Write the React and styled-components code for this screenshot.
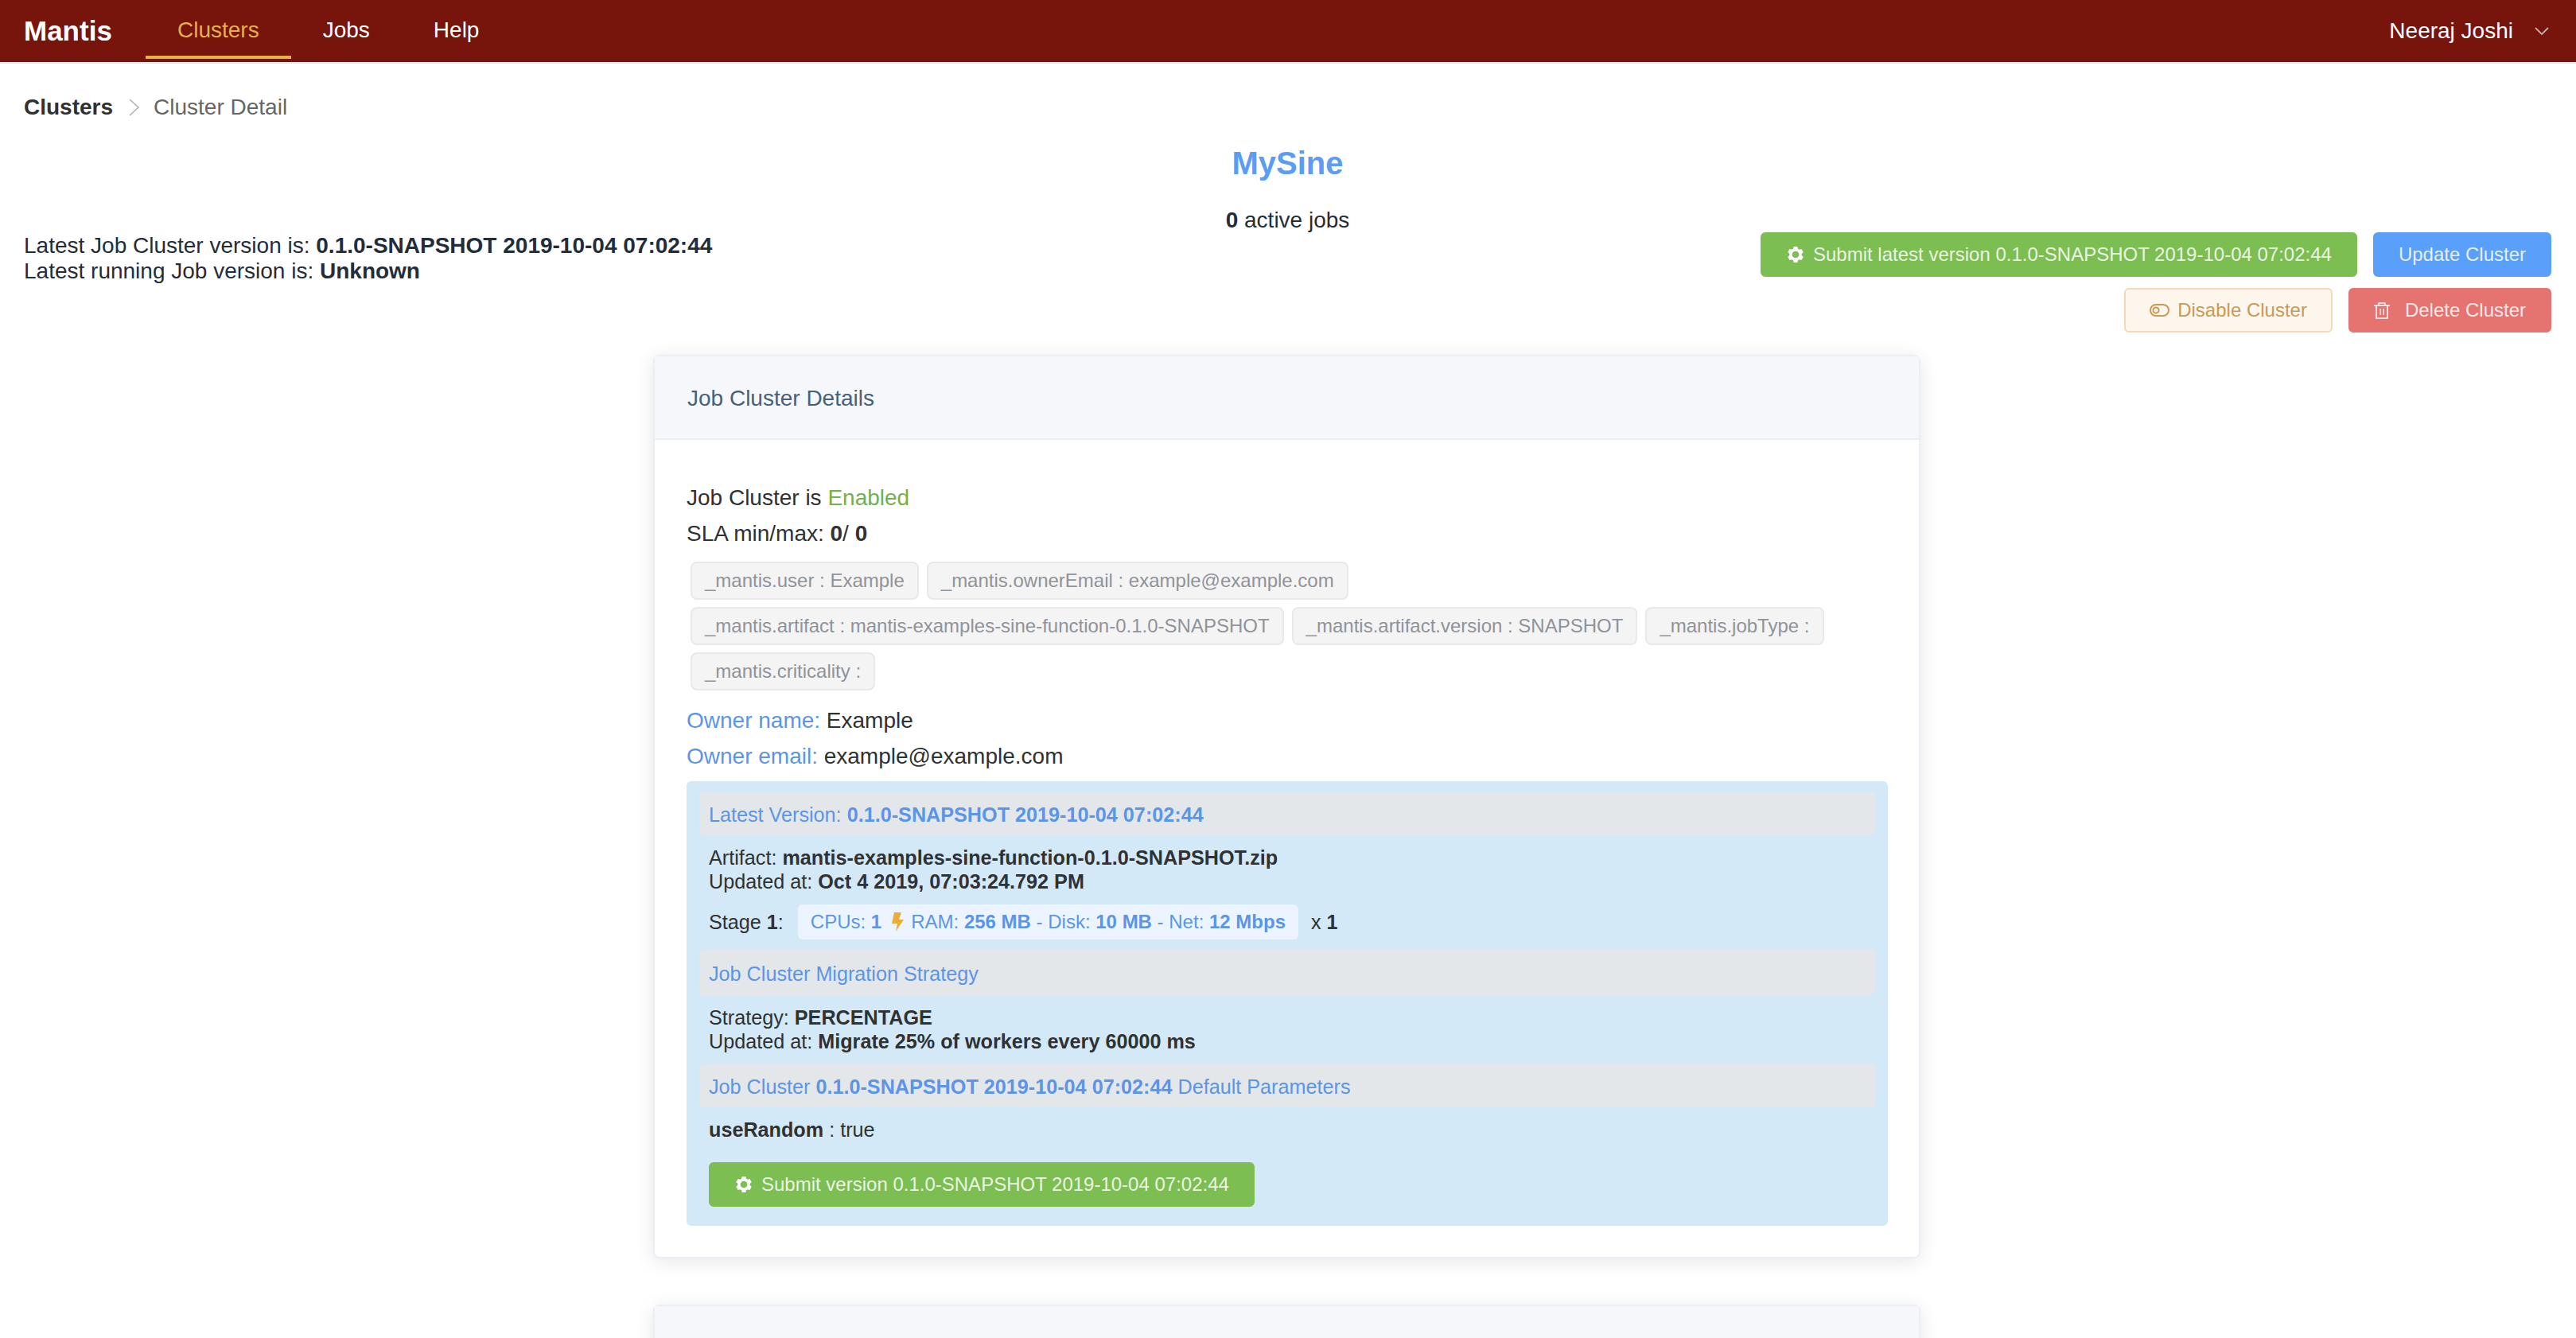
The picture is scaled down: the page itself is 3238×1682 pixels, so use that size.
import React from 'react';
import styled, { createGlobalStyle } from 'styled-components';

const GlobalStyle = createGlobalStyle`
  html, body {
    margin: 0;
    padding: 0;
    background: #fff;
    font-family: 'Liberation Sans', Arial, sans-serif;
    font-size: 28px;
    color: #303133;
  }
`;

const NavBar = styled.header`
  display: flex;
  align-items: center;
  height: 78px;
  background: #77140b;
  border-bottom: 2px solid #e6e6e6;
  padding: 0 34px 0 30px;
  color: #fff;
`;

const Brand = styled.div`
  font-size: 35px;
  font-weight: 700;
  width: 153px;
`;

const NavItem = styled.a`
  display: flex;
  align-items: center;
  height: 72px;
  margin-bottom: 2px;
  padding: 4px 40px 0;
  box-sizing: border-box;
  color: ${p => (p.$active ? '#e4b04a' : '#fff')};
  border-bottom: 4px solid ${p => (p.$active ? '#e4b04a' : 'transparent')};
`;

const UserMenu = styled.div`
  display: flex;
  align-items: center;
  gap: 27px;
  margin-left: auto;
`;

const Page = styled.main`
  padding: 0 31px 0 30px;
`;

const Breadcrumb = styled.nav`
  display: flex;
  align-items: center;
  height: 110px;
  color: #666;
`;

const Crumb = styled.b`
  color: #303133;
`;

const Separator = styled.span`
  display: flex;
  margin: 0 17px 0 20px;
`;

const Summary = styled.section`
  display: grid;
  grid-template-columns: 1fr auto 1fr;
  height: 256px;
`;

const VersionInfo = styled.div`
  padding-top: 103px;
  line-height: 32px;
  color: #1f2d3d;
`;

const TitleBlock = styled.div`
  text-align: center;
`;

const Title = styled.h1`
  margin: 0;
  font-size: 40px;
  line-height: 30px;
  color: #5b9df5;
`;

const ActiveJobs = styled.div`
  margin-top: 37px;
  line-height: 40px;
  color: #1f2d3d;
`;

const Actions = styled.div`
  display: flex;
  flex-direction: column;
  align-items: flex-end;
  gap: 14px;
  padding-top: 102px;
`;

const ActionRow = styled.div`
  display: flex;
  gap: 20px;
`;

const palette = {
  success: { bg: '#7dbe53', fg: 'rgba(255, 255, 255, 0.86)', line: '#7dbe53' },
  primary: { bg: '#5a9ff9', fg: 'rgba(255, 255, 255, 0.86)', line: '#5a9ff9' },
  warning: { bg: '#fdf6ec', fg: '#c99a55', line: '#f5dab1' },
  danger: { bg: '#e5736f', fg: 'rgba(255, 255, 255, 0.86)', line: '#e5736f' },
};

const Button = styled.button`
  display: inline-flex;
  align-items: center;
  gap: ${p => p.$gap || 10}px;
  height: 56px;
  padding: 0 30px;
  box-sizing: border-box;
  font-family: inherit;
  font-size: 24px;
  border-radius: 6px;
  background: ${p => palette[p.$kind].bg};
  color: ${p => palette[p.$kind].fg};
  border: 2px solid ${p => palette[p.$kind].line};
`;

const Card = styled.section`
  width: 1593px;
  margin: ${p => p.$top || 0}px 0 0 791px;
  box-sizing: border-box;
  background: #fff;
  border: 2px solid #ebeef5;
  border-radius: 8px;
  box-shadow: 0 4px 24px rgba(0, 0, 0, 0.1);
`;

const CardHeader = styled.div`
  display: flex;
  align-items: center;
  height: 105px;
  box-sizing: border-box;
  padding: 2px 41px 0;
  background: #f5f7fa;
  border-bottom: 2px solid #ebeef5;
  color: #48617a;
`;

const CardBody = styled.div`
  padding: 50px 39px 39px 40px;
`;

const InfoLine = styled.div`
  height: 45px;
  line-height: 45px;
  color: #303133;
`;

const Enabled = styled.span`
  color: #72b14b;
`;

const TagList = styled.div`
  display: flex;
  flex-wrap: wrap;
  gap: 9px 10px;
  padding: 13px 5px 15px;
`;

const Tag = styled.span`
  display: inline-flex;
  align-items: center;
  height: 48px;
  padding: 0 16px;
  box-sizing: border-box;
  font-size: 24px;
  color: #909399;
  background: #f4f4f5;
  border: 2px solid #e9e9eb;
  border-radius: 8px;
`;

const Label = styled.span`
  color: #5b95e8;
`;

const VersionPanel = styled.div`
  margin-top: 9px;
  padding: 13px 16px 24px;
  background: #d3e9f8;
  border-radius: 6px;
  font-size: 25.2px;
`;

const SectionBar = styled.div`
  display: flex;
  align-items: center;
  gap: 0.28em;
  height: ${p => p.$h || 55}px;
  box-sizing: border-box;
  padding: 3px 12px 0;
  background: #e3e7ea;
  border-radius: 6px;
  color: #5b95e8;
`;

const Facts = styled.div`
  padding: 13px 12px 14px;
  line-height: 30px;
  color: #303133;
`;

const StageRow = styled.div`
  display: flex;
  align-items: center;
  height: 44px;
  padding: 0 12px;
  margin-bottom: 13px;
  color: #303133;
`;

const StagePill = styled.span`
  display: inline-flex;
  align-items: center;
  height: 44px;
  margin: 0 16px 0 18px;
  padding: 0 16px;
  background: #ecf5ff;
  border-radius: 6px;
  color: #5b95e8;
  font-size: 24px;
`;

const PanelAction = styled.div`
  padding: 12px 12px 0;
`;

const BoltGlyph = styled.svg`
  margin: 0 9px 0 13px;
  flex: none;
`;

const GearIcon = () => (
  <svg width="24" height="24" viewBox="-2.4 -2.4 28.8 28.8" fill="#fff">
    <path
      fillRule="evenodd"
      d="M9.2 0h5.6l.8 3.4 2 1.1 3.3-1 2.8 4.9-2.5 2.4v2.4l2.5 2.4-2.8 4.9-3.3-1-2 1.1-.8 3.4H9.2l-.8-3.4-2-1.1-3.3 1L.3 15.6l2.5-2.4v-2.4L.3 8.4l2.8-4.9 3.3 1 2-1.1zM12 6.8a5.2 5.2 0 1 0 0 10.4 5.2 5.2 0 0 0 0-10.4z"
    />
  </svg>
);

const ToggleIcon = () => (
  <svg width="25" height="16" viewBox="0 0 25 16" fill="none" stroke="#c99a55" strokeWidth="2">
    <rect x="1" y="1" width="23" height="14" rx="7" />
    <circle cx="8" cy="8" r="3.6" />
  </svg>
);

const TrashIcon = () => (
  <svg width="20" height="21" viewBox="0 0 20 21" fill="none" stroke="#fff" strokeWidth="1.4">
    <path d="M0 4h20M6 4V1h8v3M3 4v16h14V4" />
    <path d="M8 8v8M12 8v8" strokeWidth="2" strokeOpacity="0.65" />
  </svg>
);

const BoltIcon = () => (
  <BoltGlyph width="15" height="24" viewBox="0 0 15 24" fill="#e8ae3a">
    <path d="M3 0h9L9 9h6L5 24l2-10H0z" />
  </BoltGlyph>
);

const DownChevron = () => (
  <svg width="18" height="10" viewBox="0 0 18 10" fill="none" stroke="#c4aeaa" strokeWidth="1.8">
    <path d="M1 1l8 8 8-8" />
  </svg>
);

const RightChevron = () => (
  <svg width="14" height="22" viewBox="0 0 14 22" fill="none" stroke="#b0b0b0" strokeWidth="1.5">
    <path d="M1 1l11 10L1 21" />
  </svg>
);

const LATEST = '0.1.0-SNAPSHOT 2019-10-04 07:02:44';

const tags = [
  '_mantis.user : Example',
  '_mantis.ownerEmail : example@example.com',
  '_mantis.artifact : mantis-examples-sine-function-0.1.0-SNAPSHOT',
  '_mantis.artifact.version : SNAPSHOT',
  '_mantis.jobType :',
  '_mantis.criticality :',
];

export default function App() {
  return (
    <>
      <GlobalStyle />
      <NavBar>
        <Brand>Mantis</Brand>
        <NavItem $active>Clusters</NavItem>
        <NavItem>Jobs</NavItem>
        <NavItem>Help</NavItem>
        <UserMenu>
          Neeraj Joshi
          <DownChevron />
        </UserMenu>
      </NavBar>
      <Page>
        <Breadcrumb>
          <Crumb>Clusters</Crumb>
          <Separator>
            <RightChevron />
          </Separator>
          Cluster Detail
        </Breadcrumb>
        <Summary>
          <VersionInfo>
            <div>
              Latest Job Cluster version is: <b>{LATEST}</b>
            </div>
            <div>
              Latest running Job version is: <b>Unknown</b>
            </div>
          </VersionInfo>
          <TitleBlock>
            <Title>MySine</Title>
            <ActiveJobs>
              <b>0</b> active jobs
            </ActiveJobs>
          </TitleBlock>
          <Actions>
            <ActionRow>
              <Button $kind="success">
                <GearIcon />
                Submit latest version {LATEST}
              </Button>
              <Button $kind="primary">Update Cluster</Button>
            </ActionRow>
            <ActionRow>
              <Button $kind="warning">
                <ToggleIcon />
                Disable Cluster
              </Button>
              <Button $kind="danger" $gap={19}>
                <TrashIcon />
                Delete Cluster
              </Button>
            </ActionRow>
          </Actions>
        </Summary>
        <Card>
          <CardHeader>Job Cluster Details</CardHeader>
          <CardBody>
            <InfoLine>
              Job Cluster is <Enabled>Enabled</Enabled>
            </InfoLine>
            <InfoLine>
              SLA min/max: <b>0</b>/ <b>0</b>
            </InfoLine>
            <TagList>
              {tags.map(tag => (
                <Tag key={tag}>{tag}</Tag>
              ))}
            </TagList>
            <InfoLine>
              <Label>Owner name:</Label> Example
            </InfoLine>
            <InfoLine>
              <Label>Owner email:</Label> example@example.com
            </InfoLine>
            <VersionPanel>
              <SectionBar>
                Latest Version: <b>{LATEST}</b>
              </SectionBar>
              <Facts>
                <div>
                  Artifact: <b>mantis-examples-sine-function-0.1.0-SNAPSHOT.zip</b>
                </div>
                <div>
                  Updated at: <b>Oct 4 2019, 07:03:24.792 PM</b>
                </div>
              </Facts>
              <StageRow>
                <span>
                  Stage <b>1</b>:
                </span>
                <StagePill>
                  <span>
                    CPUs: <b>1</b>
                  </span>
                  <BoltIcon />
                  <span>
                    RAM: <b>256 MB</b> - Disk: <b>10 MB</b> - Net: <b>12 Mbps</b>
                  </span>
                </StagePill>
                <span>
                  x <b>1</b>
                </span>
              </StageRow>
              <SectionBar $h={57}>Job Cluster Migration Strategy</SectionBar>
              <Facts>
                <div>
                  Strategy: <b>PERCENTAGE</b>
                </div>
                <div>
                  Updated at: <b>Migrate 25% of workers every 60000 ms</b>
                </div>
              </Facts>
              <SectionBar $h={54}>
                Job Cluster <b>{LATEST}</b> Default Parameters
              </SectionBar>
              <Facts>
                <div>
                  <b>useRandom</b> : true
                </div>
              </Facts>
              <PanelAction>
                <Button $kind="success">
                  <GearIcon />
                  Submit version {LATEST}
                </Button>
              </PanelAction>
            </VersionPanel>
          </CardBody>
        </Card>
        <Card $top={58}>
          <CardHeader>Active Jobs</CardHeader>
        </Card>
      </Page>
    </>
  );
}
